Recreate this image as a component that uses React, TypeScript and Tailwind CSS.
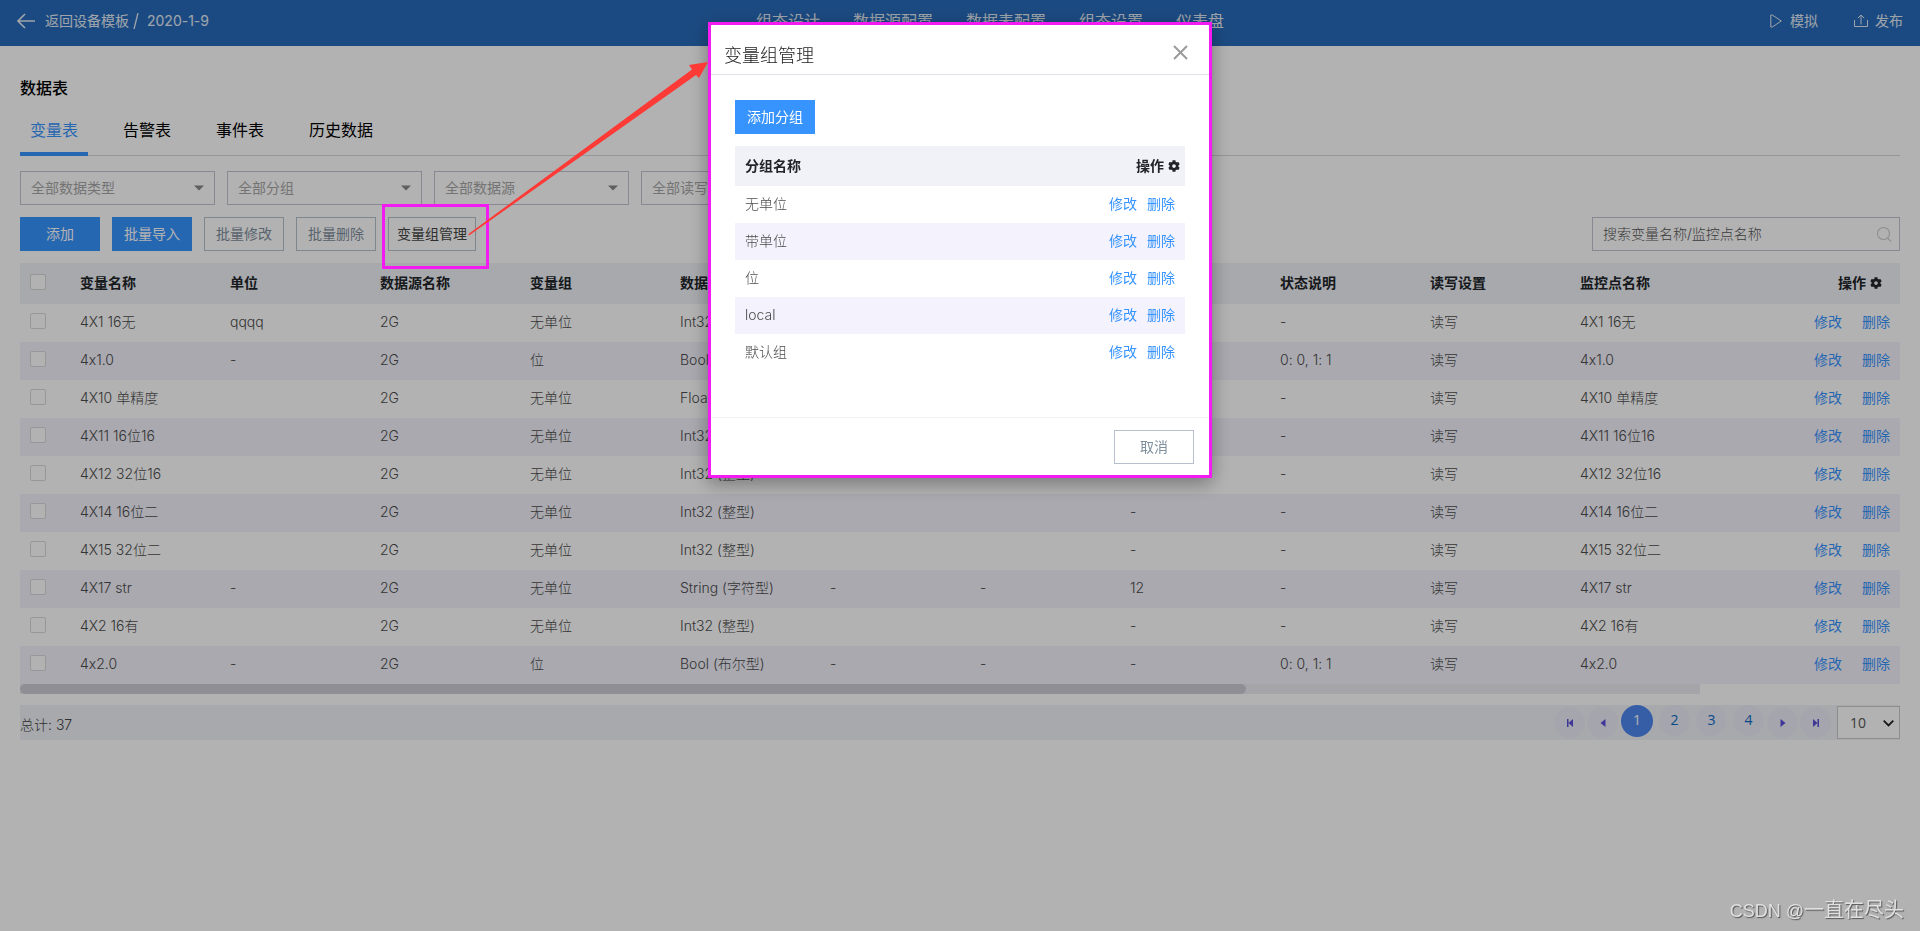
import React from "react";
import { FaCog } from "react-icons/fa";

type Row = {
  name: string;
  unit: string;
  group: string;
  type: string;
  a: string;
  b: string;
  c: string;
  state: string;
};

const rows: Row[] = [
  { name: "4X1 16无", unit: "qqqq", group: "无单位", type: "Int32", a: "", b: "", c: "", state: "-" },
  { name: "4x1.0", unit: "-", group: "位", type: "Bool", a: "", b: "", c: "", state: "0: 0, 1: 1" },
  { name: "4X10 单精度", unit: "", group: "无单位", type: "Float", a: "", b: "", c: "", state: "-" },
  { name: "4X11 16位16", unit: "", group: "无单位", type: "Int32", a: "", b: "", c: "", state: "-" },
  { name: "4X12 32位16", unit: "", group: "无单位", type: "Int32 (整型)", a: "", b: "", c: "", state: "-" },
  { name: "4X14 16位二", unit: "", group: "无单位", type: "Int32 (整型)", a: "", b: "", c: "-", state: "-" },
  { name: "4X15 32位二", unit: "", group: "无单位", type: "Int32 (整型)", a: "", b: "", c: "-", state: "-" },
  { name: "4X17 str", unit: "-", group: "无单位", type: "String (字符型)", a: "-", b: "-", c: "12", state: "-" },
  { name: "4X2 16有", unit: "", group: "无单位", type: "Int32 (整型)", a: "", b: "", c: "-", state: "-" },
  { name: "4x2.0", unit: "-", group: "位", type: "Bool (布尔型)", a: "-", b: "-", c: "-", state: "0: 0, 1: 1" },
];

const columns = ["变量名称", "单位", "数据源名称", "变量组", "数据类型", "", "", "", "状态说明", "读写设置", "监控点名称"];
const groups = ["无单位", "带单位", "位", "local", "默认组"];
const filters = ["全部数据类型", "全部分组", "全部数据源", "全部读写"];

function TopBar() {
  return (
    <header className="flex h-[46px] items-center bg-[#286bba] pb-1 text-sm text-[#e4ebf5]">
      <div className="flex flex-1 items-center pl-[17px]">
        <a href="#back" className="flex items-center gap-2.5">
          <svg width="18" height="16" viewBox="0 0 18 16" fill="none" stroke="currentColor" strokeWidth="1.6">
            <path d="M18 8H1M8 1L1 8l7 7" />
          </svg>
          返回设备模板
        </a>
        <svg className="ml-1" width="6" height="16" viewBox="0 0 6 16" stroke="currentColor" strokeWidth="1.3">
          <path d="M5 0L1 16" />
        </svg>
        <span className="ml-2">2020-1-9</span>
      </div>
      <nav className="flex gap-[33px] pl-[60px] text-base">
        <a href="#design">组态设计</a>
        <a href="#source">数据源配置</a>
        <a href="#table">数据表配置</a>
        <a href="#settings">组态设置</a>
        <a href="#dashboard">仪表盘</a>
      </nav>
      <div className="flex flex-1 justify-end gap-9 pr-[17px]">
        <button className="flex items-center gap-2">
          <svg width="12" height="14" viewBox="0 0 12 14" fill="none" stroke="currentColor" strokeLinejoin="round">
            <path d="M.8 1v12h1.500L11.300 7 2.300 1z" />
          </svg>
          模拟
        </button>
        <button className="flex items-center gap-[7px]">
          <svg width="14" height="14" viewBox="0 0 14 14" fill="none" stroke="currentColor">
            <path d="M.5 6v6.500h13V6M7 10.500V1M3.800 4.200L7 1l3.200 3.200" />
          </svg>
          发布
        </button>
      </div>
    </header>
  );
}

function Checkbox({ label }: { label: string }) {
  return (
    <input
      type="checkbox"
      aria-label={label}
      className="mb-0.5 block size-4 appearance-none rounded-xs border border-[#d8d8d8] bg-white"
    />
  );
}

function VariableTable() {
  return (
    <table className="w-full table-fixed text-left text-sm leading-5 font-light text-[#4c4c4c] [&_td]:pb-0.5 [&_th]:pb-0.5">
      <colgroup>
        <col className="w-[50px]" />
        {columns.map((_, i) => (
          <col key={i} className="w-[150px]" />
        ))}
        <col />
      </colgroup>
      <thead>
        <tr className="h-[41px] bg-[#f0f2f7] text-[#212529]">
          <th className="pl-2.5">
            <Checkbox label="全选" />
          </th>
          {columns.map((c, i) => (
            <th key={i} className="pl-2.5 font-semibold">
              {c}
            </th>
          ))}
          <th className="pr-[18px] font-semibold">
            <span className="flex items-center justify-end gap-1">
              操作
              <FaCog size={12} />
            </span>
          </th>
        </tr>
      </thead>
      <tbody>
        {rows.map((r) => (
          <tr key={r.name} className="h-[38px] even:bg-[#f3f2fb]">
            <td className="pl-2.5">
              <Checkbox label={r.name} />
            </td>
            <td className="pl-2.5">{r.name}</td>
            <td className="pl-2.5">{r.unit}</td>
            <td className="pl-2.5">2G</td>
            <td className="pl-2.5">{r.group}</td>
            <td className="pl-2.5">{r.type}</td>
            <td className="pl-2.5">{r.a}</td>
            <td className="pl-2.5">{r.b}</td>
            <td className="pl-2.5">{r.c}</td>
            <td className="pl-2.5">{r.state}</td>
            <td className="pl-2.5">读写</td>
            <td className="pl-2.5">{r.name}</td>
            <td className="pr-2.5">
              <span className="flex justify-end gap-5 font-normal text-[#3794ff]">
                <a href="#edit">修改</a>
                <a href="#delete">删除</a>
              </span>
            </td>
          </tr>
        ))}
      </tbody>
    </table>
  );
}

function PageArrow({ label, d }: { label: string; d: string }) {
  return (
    <button aria-label={label} className="mt-0.5 flex size-[31px] items-center justify-center rounded-full bg-[#edecf8] text-[#5b50d8]">
      <svg width="8" height="8" viewBox="0 0 8 8" fill="currentColor">
        <path d={d} />
      </svg>
    </button>
  );
}

function Pagination() {
  return (
    <footer className="mt-[11px] flex h-[35px] items-start justify-between bg-[#f0f2f7]">
      <p className="pt-2.5 text-sm leading-5 font-light text-[#444]">总计: 37</p>
      <div className="flex items-start font-['Open_Sans','Noto_Sans_CJK_SC',sans-serif] text-sm text-[#0a6ac4]">
        <div className="flex gap-0.5">
          <PageArrow label="首页" d="M1 0h1.500v8H1zM7 0v8L2.500 4z" />
          <PageArrow label="上一页" d="M6.500 0v8L1.500 4z" />
        </div>
        <div className="mx-[3px] flex gap-1.5">
          <button className="size-8 rounded-full bg-[#4d87ef] pb-0.5 text-white">1</button>
          <button className="size-[31px] rounded-full bg-[#edecf8] pb-0.5">2</button>
          <button className="size-[31px] rounded-full bg-[#edecf8] pb-0.5">3</button>
          <button className="size-[31px] rounded-full bg-[#edecf8] pb-0.5">4</button>
        </div>
        <div className="flex gap-0.5">
          <PageArrow label="下一页" d="M1.500 0v8L6.500 4z" />
          <PageArrow label="末页" d="M5.500 0H7v8H5.500zM1 0v8L5.500 4z" />
        </div>
        <div className="relative mt-px ml-1.5">
          <select aria-label="每页条数" className="block h-[33px] w-[63px] appearance-none border border-[#ccc] bg-white pl-3 text-[#555]">
            <option>10</option>
          </select>
          <svg className="pointer-events-none absolute top-3.5 right-1.5" width="11" height="7" viewBox="0 0 11 7" fill="none" stroke="#222" strokeWidth="1.8">
            <path d="M.7 .7L5.500 5.500 10.300.7" />
          </svg>
        </div>
      </div>
    </footer>
  );
}

function GroupDialog() {
  return (
    <div className="fixed inset-0 z-10 flex items-start justify-center bg-black/30 pt-[22px]">
      <section
        role="dialog"
        aria-labelledby="group-title"
        className="w-[504px] border-3 border-[#f41af2] bg-white shadow-[0_5px_18px_rgba(0,0,0,0.35)]"
      >
        <div className="flex h-[50px] items-center justify-between border-b border-[#dee2e6] pr-[21px] pl-[13px]">
          <h2 id="group-title" className="pt-3 text-lg leading-7 font-light text-[#222]">
            变量组管理
          </h2>
          <button aria-label="关闭" className="pt-1.5 text-[#999]">
            <svg width="15" height="15" viewBox="0 0 15 15" stroke="currentColor" strokeWidth="1.900">
              <path d="M1 1l13 13M14 1L1 14" />
            </svg>
          </button>
        </div>
        <div className="h-[342px] px-6 pt-[25px]">
          <button className="h-[34px] w-20 bg-[#3794ff] text-sm text-white">添加分组</button>
          <table className="mt-3 w-full text-left text-sm leading-5 font-light text-[#4c4c4c] [&_td]:pb-0.5">
            <thead>
              <tr className="h-10 bg-[#f0f2f7] text-[#212529]">
                <th className="pl-2.5 font-semibold">分组名称</th>
                <th className="pr-[5px] font-semibold">
                  <span className="flex items-center justify-end gap-1">
                    操作
                    <FaCog size={12} />
                  </span>
                </th>
              </tr>
            </thead>
            <tbody>
              {groups.map((g) => (
                <tr key={g} className="h-[37px] even:bg-[#f4f2fc]">
                  <td className="pl-2.5">{g}</td>
                  <td className="pr-2.5">
                    <span className="flex justify-end gap-2.5 font-normal text-[#3794ff]">
                      <a href="#edit-group">修改</a>
                      <a href="#delete-group">删除</a>
                    </span>
                  </td>
                </tr>
              ))}
            </tbody>
          </table>
        </div>
        <div className="flex justify-end border-t border-[#f0f1f3] px-[15px] pt-3 pb-[11px]">
          <button className="h-[34px] w-20 border border-[#b5c0cc] text-sm text-[#7f8f9e]">取消</button>
        </div>
      </section>
    </div>
  );
}

export default function App() {
  return (
    <div className="min-h-screen bg-white font-['Inter','Noto_Sans_CJK_SC',sans-serif] [font-feature-settings:'calt'_0]">
      <TopBar />
      <main className="px-5 pt-7">
        <h1 className="text-base leading-7 font-medium text-black">数据表</h1>
        <div role="tablist" className="mt-3 flex h-[42px] items-stretch gap-[25px] border-b border-[#d8d8d8] text-base leading-7 text-black">
          <button role="tab" aria-selected="true" className="-mb-px border-b-4 border-[#3794ff] px-2.5 pb-1.5 text-[#3794ff]">
            变量表
          </button>
          <button role="tab" className="px-2.5 pb-2.5">告警表</button>
          <button role="tab" className="px-2.5 pb-2.5">事件表</button>
          <button role="tab" className="px-2.5 pb-2.5">历史数据</button>
        </div>
        <div className="mt-[15px] flex gap-3">
          {filters.map((f) => (
            <div key={f} className="relative">
              <select aria-label={f} className="block h-[34px] w-[195px] appearance-none border border-[#c5c2d0] bg-white pl-2.5 text-sm text-[#a7a7a7]">
                <option>{f}</option>
              </select>
              <svg className="pointer-events-none absolute top-3.5 right-[11px]" width="10" height="6" viewBox="0 0 10 6" fill="#888">
                <path d="M0 .5h10L5 5.500z" />
              </svg>
            </div>
          ))}
        </div>
        <div className="mt-3 flex items-start gap-3 text-sm">
          <button className="h-[34px] w-20 bg-[#3794ff] text-white">添加</button>
          <button className="h-[34px] w-20 bg-[#3794ff] text-white">批量导入</button>
          <button className="h-[34px] w-20 border border-[#b5c0cc] text-[#7f8f9e]">批量修改</button>
          <button className="h-[34px] w-20 border border-[#b5c0cc] text-[#7f8f9e]">批量删除</button>
          <div className="relative">
            <button className="h-[34px] w-[88px] border border-[#b5c0cc] text-[#444]">变量组管理</button>
            <div className="pointer-events-none absolute -top-[13px] -left-1.5 z-20 h-[65px] w-[107px] border-3 border-[#f41af2]" />
            <svg
              className="pointer-events-none absolute -top-[155px] left-20 z-20 max-w-none"
              width="241"
              height="174"
              viewBox="0 0 241 174"
              fill="#fe3a36"
            >
              <path d="M0.500 172L224 7.500L221 3L240 0L231 16L228 13L1 173.500z" />
            </svg>
          </div>
          <div className="relative ml-auto">
            <input
              type="text"
              aria-label="搜索"
              placeholder="搜索变量名称/监控点名称"
              className="block h-[34px] w-[308px] border border-[#c5c2d0] bg-white pr-8 pb-0.5 pl-2.5 text-sm font-light placeholder:text-[#555]"
            />
            <svg className="absolute top-2.5 right-2" width="16" height="15" viewBox="0 0 16 15" fill="none" stroke="#d0d0d0" strokeWidth="1.200">
              <circle cx="7.500" cy="6.500" r="6" />
              <path d="M11.500 11l3.500 3.500" />
            </svg>
          </div>
        </div>
        <div className="mt-3">
          <VariableTable />
          <div className="mr-[200px] h-2.5 bg-[#ecedf3]">
            <div className="h-2.5 w-[73%] rounded-full bg-[#cdccd4]" />
          </div>
        </div>
        <Pagination />
      </main>
      <GroupDialog />
      <p className="fixed right-4 bottom-1.5 z-20 font-['Liberation_Sans','Noto_Sans_CJK_SC',sans-serif] text-lg leading-7 text-[#e0e0e0] [text-shadow:1px_1px_1px_#555]">
        CSDN @<span className="text-xl leading-7">一直在尽头</span>
      </p>
    </div>
  );
}
